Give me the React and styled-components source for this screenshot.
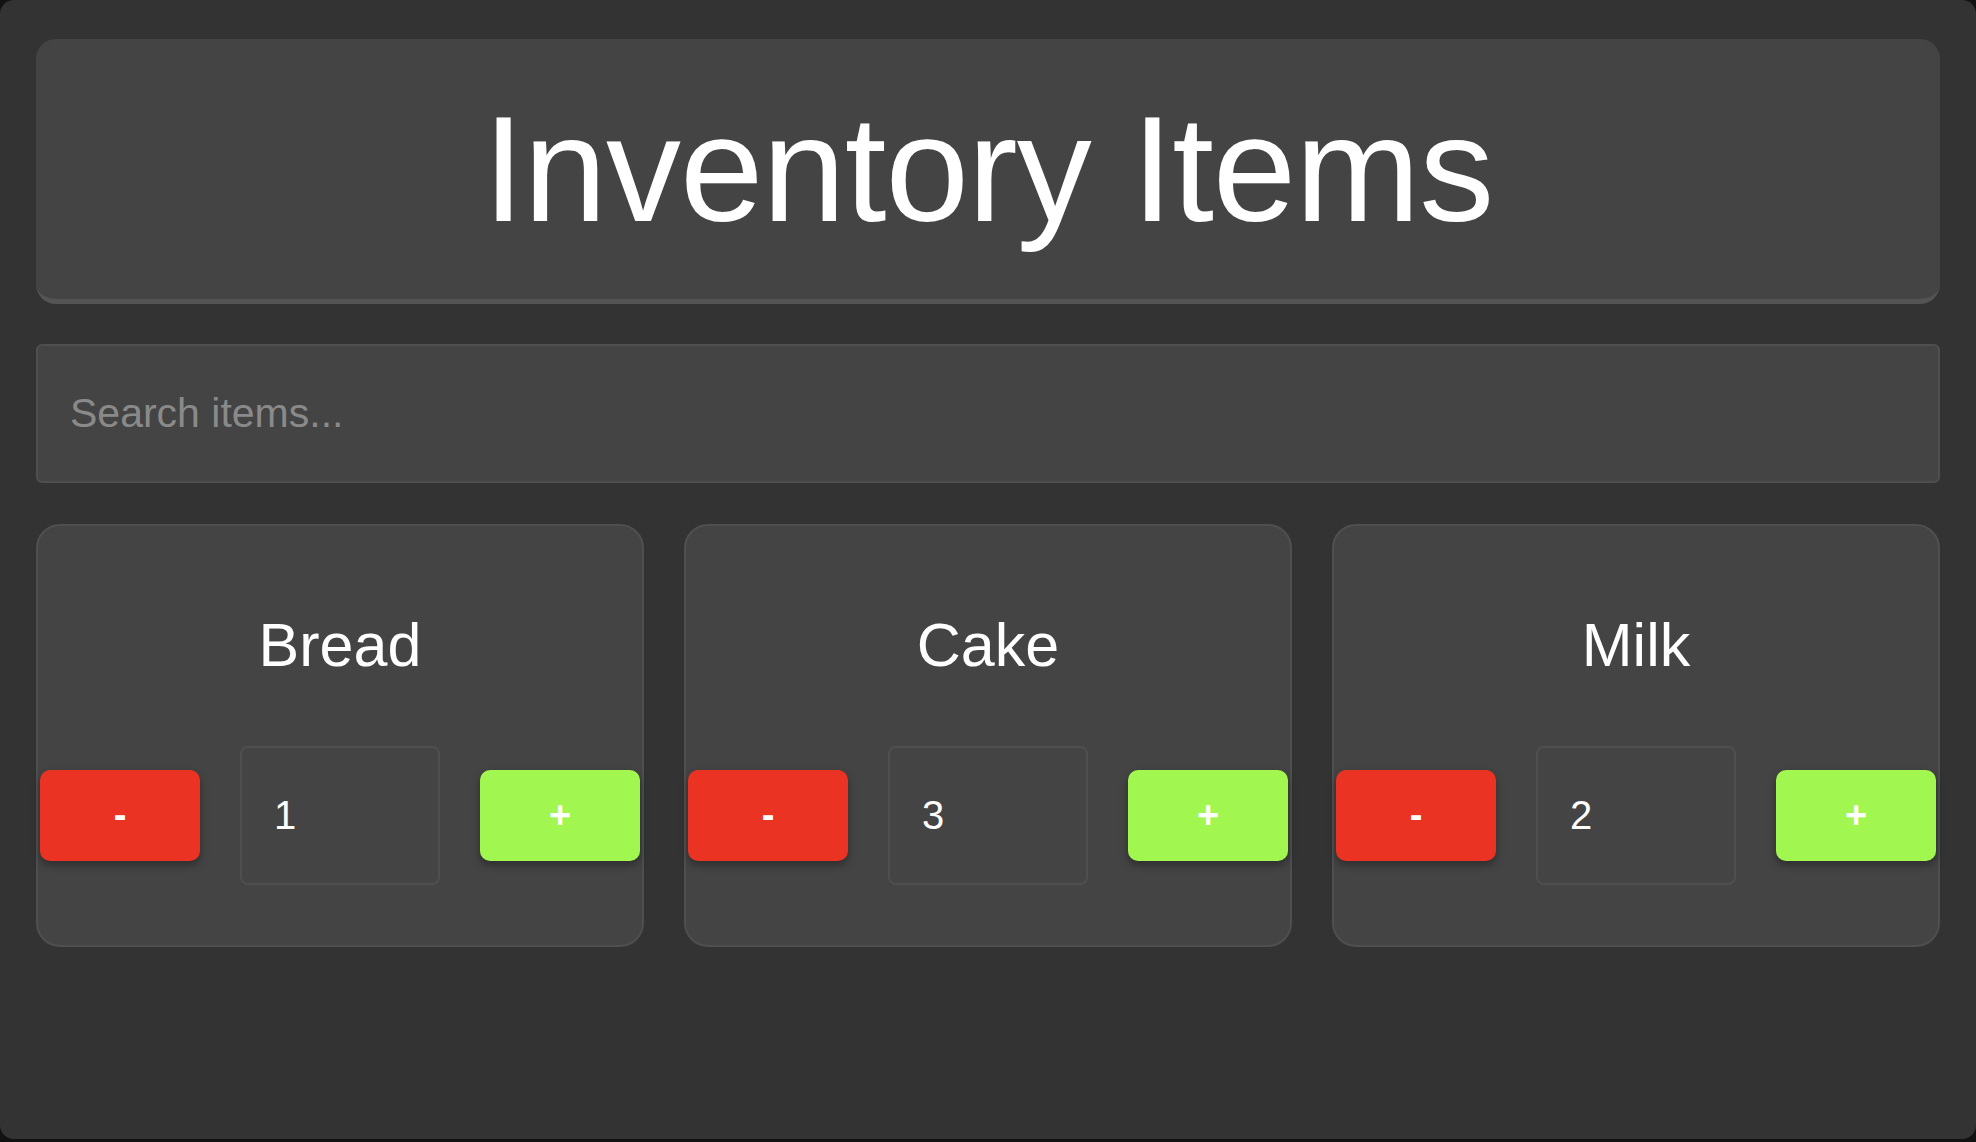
import React, { useState } from "react";
import styled, { createGlobalStyle } from "styled-components";

const GlobalStyle = createGlobalStyle`
  html, body {
    margin: 0;
    padding: 0;
    background: #121212;
  }
  * {
    box-sizing: border-box;
  }
`;

const Window = styled.div`
  height: 1139px;
  background: #333333;
  border-radius: 14px;
  padding: 39px 36px 0;
  font-family: "Liberation Sans", Arial, sans-serif;
  color: #ffffff;
`;

const Header = styled.header`
  height: 265px;
  background: #444444;
  border-radius: 20px;
  border-bottom: 5px solid #545454;
  display: flex;
  align-items: center;
  justify-content: center;
  margin-bottom: 40px;
`;

const Title = styled.h1`
  margin: 0;
  font-size: 150px;
  font-weight: 300;
  line-height: 1.15;
  letter-spacing: -1px;
`;

const SearchInput = styled.input`
  display: block;
  width: 100%;
  height: 139px;
  margin: 0 0 41px;
  padding: 0 32px;
  background: #444444;
  border: 2px solid #4f4f4f;
  border-radius: 6px;
  color: #ffffff;
  font-family: inherit;
  font-size: 41px;
  outline: none;

  &::placeholder {
    color: #8a8a8a;
  }
`;

const Grid = styled.div`
  display: grid;
  grid-template-columns: repeat(3, 1fr);
  gap: 40px;
`;

const Card = styled.div`
  background: #444444;
  border: 2px solid #4f4f4f;
  border-radius: 24px;
  padding: 85px 2px 60px;
  display: flex;
  flex-direction: column;
  align-items: stretch;
`;

const ItemName = styled.h2`
  margin: 0 0 66px;
  text-align: center;
  font-size: 61px;
  font-weight: 400;
  line-height: 69px;
`;

const Controls = styled.div`
  display: flex;
  align-items: center;
  justify-content: space-between;
`;

const StepButton = styled.button`
  width: 160px;
  height: 91px;
  border: none;
  border-radius: 10px;
  background: ${(p) => (p.$kind === "minus" ? "#ea3323" : "#a1f74f")};
  color: #ffffff;
  font-family: inherit;
  font-size: 38px;
  font-weight: 700;
  box-shadow: 0 4px 8px rgba(0, 0, 0, 0.35);
  cursor: pointer;
`;

const Quantity = styled.input`
  width: 200px;
  height: 139px;
  padding: 0 32px;
  background: #444444;
  border: 2px solid #4f4f4f;
  border-radius: 8px;
  color: #ffffff;
  font-family: inherit;
  font-size: 40px;
  outline: none;
`;

const initialItems = [
  { name: "Bread", qty: 1 },
  { name: "Cake", qty: 3 },
  { name: "Milk", qty: 2 },
];

export default function App() {
  const [items, setItems] = useState(initialItems);
  const [query, setQuery] = useState("");

  const change = (name, delta) => {
    setItems((list) =>
      list.map((it) =>
        it.name === name ? { ...it, qty: Math.max(0, it.qty + delta) } : it
      )
    );
  };

  const visible = items.filter((it) =>
    it.name.toLowerCase().includes(query.toLowerCase())
  );

  return (
    <>
      <GlobalStyle />
      <Window>
        <Header>
          <Title>Inventory Items</Title>
        </Header>
        <SearchInput
          type="text"
          placeholder="Search items..."
          value={query}
          onChange={(evt) => setQuery(evt.target.value)}
        />
        <Grid>
          {visible.map((it) => (
            <Card key={it.name}>
              <ItemName>{it.name}</ItemName>
              <Controls>
                <StepButton $kind="minus" onClick={() => change(it.name, -1)}>
                  -
                </StepButton>
                <Quantity
                  type="text"
                  value={it.qty}
                  onChange={(evt) => {
                    const n = parseInt(evt.target.value, 10);
                    setItems((list) =>
                      list.map((x) =>
                        x.name === it.name ? { ...x, qty: isNaN(n) ? 0 : n } : x
                      )
                    );
                  }}
                />
                <StepButton $kind="plus" onClick={() => change(it.name, 1)}>
                  +
                </StepButton>
              </Controls>
            </Card>
          ))}
        </Grid>
      </Window>
    </>
  );
}
